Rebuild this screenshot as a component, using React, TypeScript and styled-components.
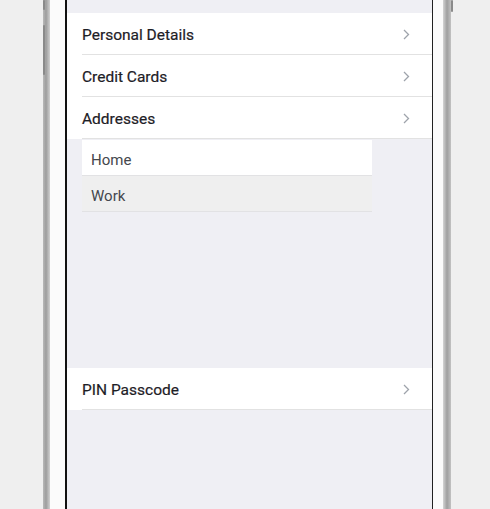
import styled, { createGlobalStyle } from 'styled-components';

const GlobalStyle = createGlobalStyle`
    html, body {
        margin: 0;
        padding: 0;
        background: #efefef;
        overflow: hidden;
    }
    body {
        font-family: Roboto, "Liberation Sans", sans-serif;
    }
`;

const Stage = styled.div`
    height: 509px;
    padding-left: 43px;
    display: flex;
`;

/* 폰 바깥쪽 금속 테두리 */
const Phone = styled.div`
    position: relative;
    width: 408px;
    height: 100%;
    display: flex;
    background: linear-gradient(90deg, #b9b9b9 0px, #9d9d9d 3px, #d0d0d0 7px, transparent 7px),
        linear-gradient(270deg, #c2c2c2 0px, #9f9f9f 4px, #d4d4d4 8px, transparent 8px);
    padding: 0 8px 0 7px;
    box-sizing: border-box;
`;

const SideButton = styled.span<{ $top: number; $height: number; $right?: boolean }>`
    position: absolute;
    top: ${(p) => p.$top}px;
    height: ${(p) => p.$height}px;
    width: 2px;
    ${(p) => (p.$right ? 'right: -2px;' : 'left: 0;')}
    background: #8a8a8a;
    border-radius: 1px;
`;

const Bezel = styled.div`
    flex: 1;
    display: flex;
    background: #fbfbfb;
    padding: 0 10px 0 15px;
`;

const Screen = styled.div`
    flex: 1;
    background: #efeff4;
    border-left: 2px solid #111;
    border-right: 1px solid #222;
    padding-top: 13px;
    display: flex;
    flex-direction: column;
`;

const Group = styled.div`
    background: #fff;
`;

const Row = styled.div`
    height: 42px;
    margin-left: 15px;
    padding: 2px 22px 0 0;
    display: flex;
    align-items: center;
    justify-content: space-between;
    border-bottom: 1px solid #e2e2e2;
    box-sizing: border-box;
    font-size: 15.5px;
    color: #1d2026;
    -webkit-text-stroke: 0.2px #1d2026;
`;

const SubMenu = styled.div`
    margin-left: 15px;
    width: 290px;
    margin-top: 1px;
`;

const SubItem = styled.div<{ $active?: boolean }>`
    height: 36px;
    padding: 4px 0 0 9px;
    display: flex;
    align-items: center;
    background: ${(p) => (p.$active ? '#fff' : '#efefef')};
    border-bottom: 1px solid #e2e2e4;
    box-sizing: border-box;
    font-size: 15px;
    color: #45474d;
`;

const Spacer = styled.div`
    height: 156px;
`;

function Chevron() {
    return (
        <svg width="7" height="11" viewBox="0 0 7 11">
            <path d="M1 1l4.5 4.5L1 10" stroke="#9ea3ab" strokeWidth="1.3" fill="none" />
        </svg>
    );
}

const items = ['Personal Details', 'Credit Cards', 'Addresses'];

export default function App() {
    return (
        <>
            <GlobalStyle />
            <Stage>
                <Phone>
                    <SideButton $top={0} $height={10} />
                    <SideButton $top={25} $height={50} />
                    <SideButton $top={0} $height={12} $right />
                    <Bezel>
                        <Screen>
                            <Group>
                                {items.map((label) => (
                                    <Row key={label}>
                                        {label}
                                        <Chevron />
                                    </Row>
                                ))}
                            </Group>
                            <SubMenu>
                                <SubItem $active>Home</SubItem>
                                <SubItem>Work</SubItem>
                            </SubMenu>
                            <Spacer />
                            <Group>
                                <Row>
                                    PIN Passcode
                                    <Chevron />
                                </Row>
                            </Group>
                        </Screen>
                    </Bezel>
                </Phone>
            </Stage>
        </>
    );
}
